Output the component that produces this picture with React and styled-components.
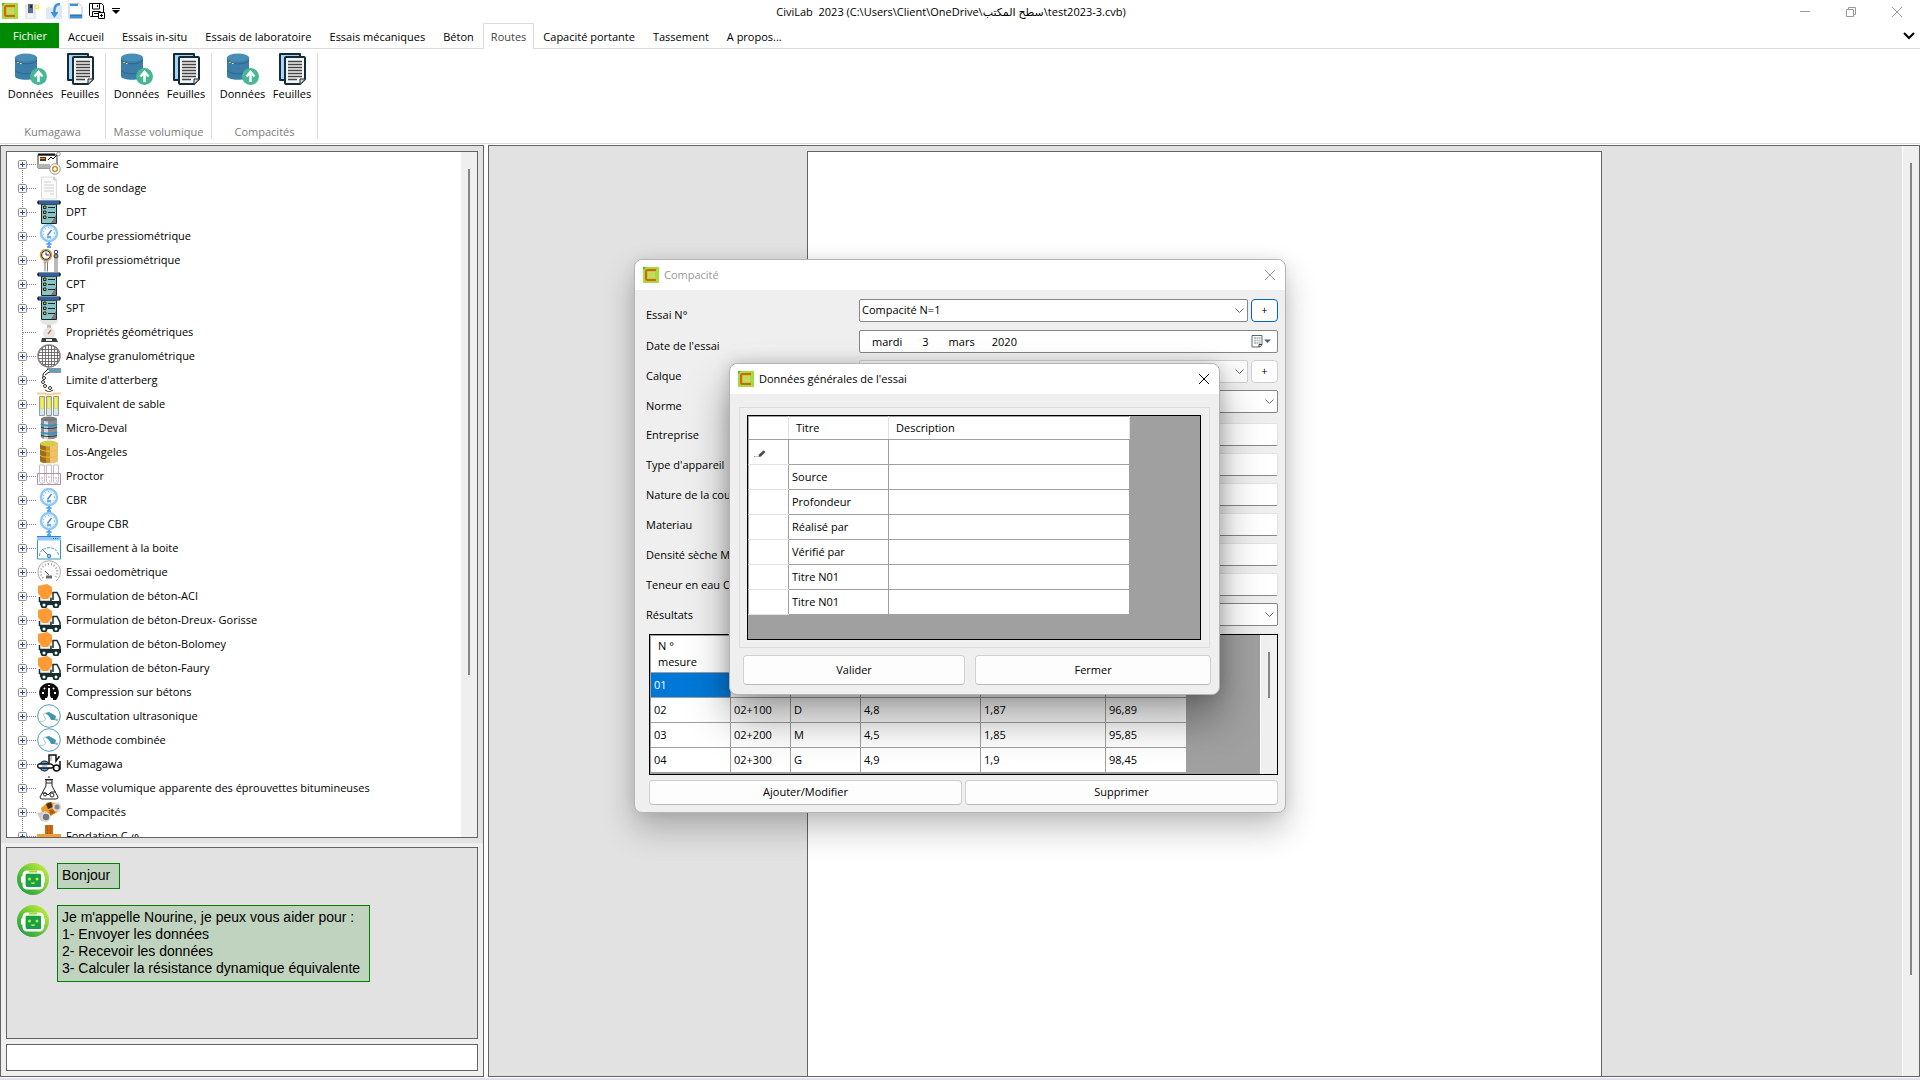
import React, { useState } from 'react'
import styled, { createGlobalStyle } from 'styled-components';


const GlobalStyle = createGlobalStyle`
  * {
    box-sizing: border-box;
  }

  body {
    margin: 0;
    font-family: 'Open Sans', 'Noto Sans', 'DejaVu Sans', sans-serif;
    font-size: 11px;
    line-height: 16px;
    color: #000;
  }

  button, input, select {
    font: inherit;
    color: inherit;
    margin: 0;
  }

  svg {
    display: block;
    flex: none;
  }
`;

/* ---------- window ---------- */

const Window = styled.div`
  position: relative;
  height: 100vh;
  display: flex;
  flex-direction: column;
  background-color: #fff;
  border-bottom: 2px solid #e1dfef;
  overflow: hidden;
`;

const TitleBar = styled.header`
  display: flex;
  height: 23px;
`;

const QuickAccess = styled.div`
  width: 120px;
  display: flex;
  align-items: center;
  gap: 6px;
  padding: 0 0 1px 2px;
`;

const IconButton = styled.button`
  border: none;
  background: none;
  padding: 0;
  cursor: pointer;
`;

const WindowTitle = styled.div`
  flex: 1;
  text-align: center;
  line-height: 24px;
  white-space: pre;
`;

const WindowButton = styled(IconButton)`
  width: 46px;
  display: flex;
  justify-content: center;
  align-items: center;
`;

const TabBar = styled.nav`
  display: flex;
  height: 26px;
  padding-right: 5px;
  border-bottom: 1px solid #dcdcdc;
`;

const Tab = styled.button`
  height: ${(props) => (props.$active ? '26px' : '25px')};
  padding: 1px ${(props) => (props.$active ? '7px' : '8px')} 0;
  border: 1px solid ${(props) => (props.$active ? '#dcdcdc' : 'transparent')};
  border-bottom: none;
  background-color: #fff;
  color: ${(props) => (props.$active ? '#444' : '#000')};
  line-height: 24px;
  white-space: nowrap;
  cursor: pointer;
`;

const FileTab = styled(Tab)`
  width: 60px;
  margin-right: -1px;
  border: none;
  background-color: #008a00;
  color: #fff;
`;

const Collapse = styled(IconButton)`
  margin-left: auto;
`;

const Ribbon = styled.section`
  display: flex;
  height: 95px;
  padding: 4px 0;
  border-bottom: 1px solid #dcdcdc;
`;

const RibbonGroup = styled.div`
  width: 106px;
  display: flex;
  flex-direction: column;
  justify-content: space-between;
  border-right: 1px solid #dcdcdc;
`;

const RibbonButtons = styled.div`
  display: flex;
  padding-left: 5px;
`;

const RibbonButton = styled(IconButton)`
  width: ${(props) => props.$w}px;
  display: flex;
  flex-direction: column;
  align-items: center;
  gap: 1px;
`;

const RibbonCaption = styled.div`
  text-align: center;
  line-height: 14px;
  color: #7c7c7c;
`;

/* ---------- panels ---------- */

const Workspace = styled.div`
  flex: 1;
  min-height: 0;
  display: flex;
  gap: 4px;
  padding: 1px 0;
`;

const Sidebar = styled.aside`
  width: 484px;
  display: flex;
  flex-direction: column;
  gap: 5px;
  padding: 5px;
  border: 1px solid #646464;
  background-color: #efefef;
`;

const TreePanel = styled.div`
  flex: 1;
  min-height: 0;
  display: flex;
  border: 1px solid #646464;
  background-color: #fff;
  box-shadow: 0 0 0 5px #e2e2e2;
  overflow: hidden;
`;

const TreeList = styled.ul`
  flex: 1;
  margin: 0;
  padding: 0 0 0 11px;
  list-style: none;
`;

const TreeItem = styled.li`
  height: 24px;
  display: flex;
  align-items: center;
  white-space: nowrap;
`;

const TreeText = styled.span`
  padding: 0 0 1px 5px;
`;

const ScrollTrack = styled.div`
  width: 17px;
  display: flex;
  justify-content: center;
  padding-top: ${(props) => props.$top}px;
  border-left: 1px solid #fff;
  background-color: #efefef;
`;

const ScrollThumb = styled.div`
  width: 2px;
  height: ${(props) => props.$size};
  background-color: #868686;
`;

const ChatPanel = styled.div`
  height: 192px;
  display: flex;
  flex-direction: column;
  gap: 10px;
  margin-top: 4px;
  padding: 15px 10px;
  border: 1px solid #646464;
  background-color: #e2e2e2;
  font-family: 'Liberation Sans', Arial, sans-serif;
  font-size: 14px;
  line-height: 17px;
`;

const ChatRow = styled.div`
  display: flex;
  align-items: flex-start;
  gap: 8px;
`;

const Bubble = styled.div`
  min-height: 26px;
  padding: 3px 9px 4px 4px;
  border: 1px solid #008000;
  background-color: #c0d3be;
  white-space: pre-line;
`;

const ChatInput = styled.input`
  height: 27px;
  padding: 0 4px;
  border: 1px solid #646464;
  background-color: #fff;
`;

const Viewer = styled.main`
  flex: 1;
  display: grid;
  grid-template-columns: 1fr 795px 1fr;
  border: 1px solid #646464;
  background-color: #e2e2e2;
`;

const Paper = styled.div`
  grid-column: 2;
  margin-top: 5px;
  border: 1px solid #646464;
  border-bottom: none;
  background-color: #fff;
`;

const ViewerScroll = styled(ScrollTrack)`
  justify-self: end;
`;

/* ---------- dialogs ---------- */

const Dialog = styled.section`
  position: absolute;
  left: ${(props) => props.$x}px;
  top: ${(props) => props.$y}px;
  width: ${(props) => props.$w}px;
  border: 1px solid #b4b4b4;
  border-radius: 8px;
  background-color: #efefef;
  box-shadow: ${(props) => (props.$front
    ? '0 24px 42px rgba(0, 0, 0, 0.36), 0 0 16px rgba(0, 0, 0, 0.18)'
    : '0 16px 32px rgba(0, 0, 0, 0.24), 0 0 14px rgba(0, 0, 0, 0.08)')};
`;

const DialogHead = styled.div`
  height: 30px;
  display: flex;
  align-items: center;
  gap: 5px;
  padding-left: 8px;
  border-radius: 8px 8px 0 0;
  background-color: #fff;
  color: ${(props) => (props.$front ? '#000' : '#999')};

  button {
    width: 30px;
    height: 30px;
    display: flex;
    justify-content: center;
    align-items: center;
    margin-left: auto;
  }
`;

const DialogTitle = styled.h2`
  margin: 0;
  font-size: 11px;
  font-weight: 400;
`;

const Form = styled.div`
  padding: 9px 7px 7px 11px;
`;

const FormRow = styled.div`
  display: grid;
  grid-template-columns: 213px 1fr;
  align-items: start;
  height: ${(props) => props.$h || 30}px;

  label {
    padding-top: ${(props) => (props.$low ? '8px' : '4px')};
    white-space: nowrap;
  }
`;

const FieldLine = styled.div`
  display: flex;
  gap: 3px;
`;

const SelectWrap = styled.div`
  position: relative;
  flex: 1;

  svg {
    position: absolute;
    right: 4px;
    top: 9px;
    pointer-events: none;
  }
`;

const Select = styled.select`
  display: block;
  width: 100%;
  height: 23px;
  padding: 0 20px 2px 2px;
  appearance: none;
  border: 1px solid ${(props) => (props.$light ? '#cfcfcf' : '#868686')};
  border-radius: 2px;
  background-color: ${(props) => (props.$light ? '#fbfbfb' : '#fff')};
`;

const DateBox = styled.div`
  display: flex;
  align-items: center;
  gap: 2px;
  height: 23px;
  padding-right: 6px;
  border: 1px solid #868686;
  border-radius: 2px;
  background-color: #fff;

  input {
    flex: 1;
    border: none;
    background: none;
    padding: 0 0 0 12px;
  }
`;

const TextBox = styled.input`
  height: 23px;
  padding: 0 3px;
  border: 1px solid #e4e4e4;
  border-bottom-color: #868686;
  border-radius: 2px;
  background-color: #fff;
`;

const Button = styled.button`
  flex: ${(props) => props.$grow || 1};
  height: ${(props) => (props.$tall ? '30px' : '25px')};
  padding: 0 0 1px;
  border: 1px solid #d0d0d0;
  border-bottom-color: #bcbcbc;
  border-radius: 4px;
  background-color: #fdfdfd;
  cursor: pointer;
`;

const PlusButton = styled(Button)`
  flex: none;
  width: 27px;
  height: 23px;
  border-color: ${(props) => (props.$focus ? '#0067c0' : '#d0d0d0')};
`;

const GridBox = styled.div`
  display: flex;
  justify-content: space-between;
  height: ${(props) => props.$h}px;
  border: 1px solid #000;
  background-color: #a0a0a0;
  overflow: hidden;
`;

const Table = styled.table`
  width: ${(props) => props.$w}px;
  height: max-content;
  table-layout: fixed;
  border-collapse: collapse;

  th, td {
    height: 25px;
    padding: 0 3px;
    border: 1px solid #a0a0a0;
    background-color: #fff;
    font-weight: 400;
    text-align: left;
    white-space: nowrap;
  }

  thead th {
    height: ${(props) => props.$head}px;
    padding: 0 7px;
    border-right-color: #e2e2e2;
  }

  tbody th {
    padding: 4px 5px 0;
    border-top-color: #e2e2e2;
    border-bottom-color: #e2e2e2;
  }

  td.selected {
    background-color: #0078d7;
    color: #fff;
  }
`;

const ResultArea = styled.div`
  padding: 1px 0 0 3px;
`;

const ButtonLine = styled.div`
  display: flex;
  gap: 3px;
  padding-top: 5px;
`;

const GeneralBody = styled.div`
  padding: 13px 9px 9px;
`;

const GroupBox = styled.div`
  padding: 7px 8px 7px 7px;
  border: 1px solid #dcdcdc;
`;

const GeneralButtons = styled.div`
  display: flex;
  gap: 10px;
  padding: 7px 0 0 4px;
  margin-right: -1px;
`;

/* ---------- icons ---------- */

const Logo = () => (
  <svg width="16" height="16" viewBox="0 0 16 16">
    <rect width="16" height="16" fill="#a4dc3c" />
    <rect x="5" y="5" width="7" height="6" fill="#c6d95c" />
    <path d="M13 3H4.500Q3 3 3 4.500V11.500Q3 13 4.500 13H13" fill="none" stroke="#d8601c" strokeWidth="2" />
    <path d="M0 0h3L0 3z" fill="#4cae3c" />
  </svg>
)

const NewIcon = () => (
  <svg width="16" height="16" viewBox="0 0 16 16">
    <rect x="1" y="1" width="11" height="15" fill="#e6e8ee" />
    <rect x="4" y="1" width="5" height="9" fill="#5a6d88" />
    <rect x="6" y="2" width="2" height="3" fill="#222d40" />
    <path d="M3 12h7M3 14h7" stroke="#fff" />
    <circle cx="13" cy="4" r="2" fill="#fff9a0" stroke="#f0e430" />
  </svg>
)

const OpenIcon = () => (
  <svg width="16" height="16" viewBox="0 0 16 16">
    <path d="M0 5l3-1 3 1 8-4 2 2v13H0z" fill="#dfe8f6" />
    <path d="M14 1c-5 0-6 4-5.500 9" fill="none" stroke="#3b93e0" strokeWidth="2.500" />
    <path d="M4.500 9h8L8.500 15z" fill="#3b93e0" />
  </svg>
)

const PageIcon = () => (
  <svg width="15" height="16" viewBox="0 0 15 16">
    <path d="M1 .5h10l3 3v12H1z" fill="#fff" stroke="#b9c2cc" />
    <path d="M2 1h8v2H2zM2 12h12v3H2z" fill="#3c8fdc" />
    <path d="M2 12h12" stroke="#1d5ea8" />
  </svg>
)

const SaveIcon = () => (
  <svg width="17" height="16" viewBox="0 0 17 16" fill="none" stroke="#000">
    <path d="M9 13.500H1.500l-1-1V.5h12l2 2V9" />
    <path d="M3.500 1v5h7V1M8.500 2v2M3.500 13V8.500h8M5 10.500h4" />
    <path d="M9.500 9.500h6v6h-6zM12.500 11v3M11 12.500h3" />
  </svg>
)

const DatabaseIcon = () => (
  <svg width="32" height="32" viewBox="0 0 32 32">
    <path d="M0 4v19c0 5 22 5 22 0V4z" fill="#3b7ea8" />
    <ellipse cx="11" cy="4.500" rx="11" ry="4" fill="#4a8db6" />
    <path d="M0 7c2 5 20 5 22 0M0 17c2 5 20 5 22 0" fill="none" stroke="#2c678e" />
    <path d="M2 9.500h2" stroke="#e8b35a" />
    <path d="M5 10.500h1.500" stroke="#fff" />
    <circle cx="23.500" cy="23.500" r="8.500" fill="#47b795" />
    <path d="M23.500 29v-8M19.500 23.500l4-4.500 4 4.500" fill="none" stroke="#fff" strokeWidth="2.500" />
  </svg>
)

const SheetsIcon = () => (
  <svg width="32" height="32" viewBox="0 0 32 32">
    <path d="M4 1h20v26H4z" fill="#a6d4fa" stroke="#142c36" strokeWidth="2" strokeLinejoin="round" />
    <path d="M9 5q0-1 1-1h18q1 0 1 1v21l-5 5H10q-1 0-1-1z" fill="#f4f4f4" stroke="#142c36" strokeWidth="2" />
    <path d="M24 31v-5h5" fill="#d4d4d4" stroke="#142c36" />
    <path d="M12 8.500h14M12 11.500h14M12 14.500h14M12 17.500h14M12 20.500h14M12 23.500h14M12 26.500h9" stroke="#444" strokeWidth="1.500" />
  </svg>
)

const MinimizeIcon = () => (
  <svg width="10" height="10" viewBox="0 0 10 10"><path d="M0 4.500h10" stroke="#999" /></svg>
)

const RestoreIcon = () => (
  <svg width="10" height="10" viewBox="0 0 10 10" fill="none" stroke="#999">
    <path d="M.5 2.500h7v7h-7zM2.500 2V.5h7v7H8" />
  </svg>
)

const CloseIcon = ({ color = '#999' }) => (
  <svg width="10" height="10" viewBox="0 0 10 10"><path d="M0 0l10 10M10 0L0 10" stroke={color} /></svg>
)

const ChevronIcon = () => (
  <svg width="9" height="6" viewBox="0 0 9 6"><path d="M.5 .5l4 4 4-4" fill="none" stroke="#666" /></svg>
)

const CalendarIcon = () => (
  <svg width="20" height="13" viewBox="0 0 20 13">
    <path d="M1 .5h10v9l-2 2.500H1z" fill="#fff" stroke="#5d6670" />
    <path d="M3 2h6.500v7H3z" fill="#b9bec4" />
    <path d="M3 4.500h6.500M3 6.500h6.500M5.500 2v7M7.500 2v7" stroke="#fff" strokeWidth=".5" />
    <path d="M8 12V9.500h3" fill="none" stroke="#333" />
    <path d="M13 4.500h7L16.500 8z" fill="#41618c" />
  </svg>
)

const PencilIcon = () => (
  <svg width="12" height="8" viewBox="0 0 12 8">
    <path d="M0 6.500h1.500M2.500 6.500h1" stroke="#999" />
    <path d="M4.500 7l.5-2.500L9.500.500l2 1.500L7 6.500z" fill="#4a4a4a" />
  </svg>
)

const Robot = () => (
  <svg width="32" height="32" viewBox="0 0 32 32">
    <defs>
      <linearGradient id="bot" x1="1" y1="0" x2="0" y2="1">
        <stop offset="0" stopColor="#d6f43c" />
        <stop offset=".5" stopColor="#6cc838" />
        <stop offset="1" stopColor="#0c9447" />
      </linearGradient>
    </defs>
    <circle cx="16" cy="16" r="16" fill="url(#bot)" />
    <path d="M5 13.500v6M27 13.500v6" stroke="#fff" strokeWidth="2" />
    <rect x="7" y="9" width="18.500" height="16" rx="3" fill="none" stroke="#fff" strokeWidth="3" />
    <rect x="9" y="11" width="15" height="13" rx="1" fill="#18a048" />
    <path d="M12 8.500h8" stroke="#9ad83c" strokeWidth="2" />
    <circle cx="12.500" cy="16" r="1.500" fill="#b4f03c" />
    <circle cx="20" cy="16" r="1.500" fill="#b4f03c" />
    <path d="M13.500 19.500q2.500 3 5 0z" fill="#d6f43c" />
  </svg>
)

const Rig = () => (
  <>
    <path d="M4.500 4h15v19.500h-15z" fill="#8cc4c6" stroke="#15262b" />
    <path d="M14 23l5-8v8z" fill="#777" />
    <path d="M1 .5h22l1 2-1 2H1l-1-2z" fill="#15262b" />
    <path d="M2 1h20v3H2z" fill="#355fa5" />
    <path d="M11 7.500h7M11 12.500h7M11 17.500h7" stroke="#15262b" />
    <path d="M6.500 6h2.500v2.500H6.500zM6.500 11h2.500v2.500H6.500zM6.500 16h2.500v2.500H6.500z" fill="#e0b53a" stroke="#15262b" />
  </>
)

const Dial = () => (
  <>
    <circle cx="12" cy="9" r="8" fill="#fff" stroke="#8ec8f8" strokeWidth="2.500" />
    <circle cx="12" cy="9" r="5.500" fill="none" stroke="#4a9bea" strokeDasharray="1 2" />
    <path d="M10.500 11.500L14.500 6M10 13h4" stroke="#3f8fe2" strokeWidth="1.500" />
    <path d="M12 18v6M9.500 20h5M10 23h4" stroke="#5aa8f0" strokeWidth="2" />
  </>
)

const Truck = () => (
  <>
    <path d="M1 2l9-2 5 3v7l-4 5H5L1 9z" fill="#ff9a35" />
    <path d="M2.500 13v4.500H14v-4" fill="none" stroke="#16302f" strokeWidth="1.500" />
    <path d="M16 16V8.500h4l3 6V20" fill="#fff" stroke="#16302f" strokeWidth="1.500" />
    <path d="M3 17h21v4H3z" fill="#16302f" />
    <circle cx="7" cy="21" r="2.500" fill="#fff" stroke="#16302f" strokeWidth="2" />
    <circle cx="19" cy="21" r="2.500" fill="#fff" stroke="#16302f" strokeWidth="2" />
  </>
)

const Probe = () => (
  <>
    <circle cx="12" cy="12" r="11.300" fill="#fff" stroke="#4b9db4" />
    <path d="M3 17c3 1 6 0 5-3s-3-4 0-5" fill="none" stroke="#a8c8d0" />
    <path d="M8 9l4-1 7 4-1 4h-4l-2-4z" fill="#3f97ae" />
    <path d="M18 15l3 1.500" stroke="#b0b0b0" strokeWidth="2" />
  </>
)

const drawings = {
  summary: (
    <>
      <path d="M1 3h19v13H1z" fill="#fff" stroke="#333" />
      <path d="M1 2.500h17" stroke="#111" strokeWidth="2" />
      <path d="M3 5h6v4H3z" fill="#5b3217" />
      <path d="M3 6.500h5" stroke="#e98a2d" />
      <path d="M1 12h12v4H1z" fill="#b4b4b4" />
      <path d="M11 8l3-3 2 2 5-5" fill="none" stroke="#111" />
      <circle cx="21.500" cy="2" r="1.800" fill="#fff" stroke="#999" />
      <circle cx="18" cy="17" r="5.300" fill="#fff" stroke="#999" />
      <circle cx="18" cy="17" r="2.400" fill="none" stroke="#c8922c" strokeWidth="1.500" />
    </>
  ),
  log: (
    <>
      <path d="M4.500 1h13l2 3v19h-15z" fill="#fafafa" stroke="#dcdcdc" />
      <path d="M7 6h7M7 9h10M7 12h10M7 15h10M13 18h4" stroke="#d0d0d0" />
      <path d="M17 1v3h2.500" fill="none" stroke="#bbb" />
    </>
  ),
  rig: <Rig />,
  dial: <Dial />,
  profile: (
    <>
      <circle cx="9" cy="7" r="5.500" fill="#fff" stroke="#cf973a" strokeWidth="1.500" />
      <circle cx="9" cy="7" r="4.300" fill="none" stroke="#222" />
      <path d="M9 4.500V7h3" fill="none" stroke="#222" />
      <path d="M8 14.500v9M10.500 14.500v9M6.500 14h5M18 10v14M20 10v14" stroke="#777" />
      <circle cx="19" cy="4" r="1.800" fill="none" stroke="#333" />
      <circle cx="19" cy="8" r="2" fill="#999" stroke="#333" />
    </>
  ),
  scale: (
    <>
      <path d="M3 0h18c0 3-4 5-9 5S3 3 3 0z" fill="#e4e4e4" />
      <path d="M10 5h4v3h-4z" fill="#bbb" />
      <circle cx="12" cy="13.500" r="6" fill="#e6e6ea" />
      <path d="M11 14l3-4" stroke="#e5762a" strokeWidth="1.500" />
      <path d="M5 18h14l2 4H4z" fill="#3a3d40" />
      <path d="M9 19h6v2H9z" fill="#eee" />
    </>
  ),
  sieve: (
    <>
      <circle cx="12" cy="12" r="11" fill="#fff" stroke="#8d7a7f" strokeWidth="1.500" />
      <path d="M5.500 4v16M8.500 2v20M11.500 1v22M14.500 2v20M17.500 3v18M20.500 6v12M4 5.500h16M2 8.500h20M1 11.500h22M2 14.500h20M3 17.500h18M6 20.500h12" stroke="#555" strokeWidth=".8" />
    </>
  ),
  limit: (
    <>
      <path d="M10 1h14M12 4h12" stroke="#182a33" />
      <path d="M12 1.500h12v2H12z" fill="#4ba5cf" />
      <path d="M11 1L6 6v3M12 4l-4 3" fill="none" stroke="#222" />
      <circle cx="7" cy="10" r="1.500" fill="none" stroke="#333" />
      <circle cx="6" cy="14" r="1.500" fill="none" stroke="#333" />
      <circle cx="8" cy="18" r="1.500" fill="none" stroke="#333" />
      <circle cx="13" cy="20" r="1.500" fill="none" stroke="#333" />
      <path d="M8 22l4 2 4-2" fill="none" stroke="#333" />
    </>
  ),
  tubes: (
    <>
      <path d="M0 1.500h8l2 1h5l2-1h7" fill="none" stroke="#efcf9b" strokeWidth="2" />
      <path d="M2.500 4.500h5v19h-5zM9.500 4.500h5v19h-5zM16.500 4.500h5v19h-5z" fill="#cfe9f8" stroke="#9a9a9a" />
      <path d="M3 5h4v12H3zM10 5h4v12h-4zM17 5h4v12h-4z" fill="#e2e23a" />
      <path d="M5 6v10M12 6v10M19 6v10" stroke="#f8f8a8" />
    </>
  ),
  drum: (
    <>
      <path d="M4 3v18c0 3 16 3 16 0V3z" fill="#8d8f92" />
      <path d="M7 4h4v19H7z" fill="#d6d8da" />
      <ellipse cx="12" cy="3" rx="8" ry="2.500" fill="#77797c" />
      <path d="M4 8c2 2 14 2 16 0M4 16c2 2 14 2 16 0" fill="none" stroke="#2d94c4" strokeWidth="2" />
      <path d="M4 11c2 2 14 2 16 0M4 19c2 2 14 2 16 0" fill="none" stroke="#333" />
    </>
  ),
  barrel: (
    <>
      <path d="M3 3v18c0 3 18 3 18 0V3z" fill="#f0c070" />
      <path d="M3 3v18c0 1 3 2 6 2V4z" fill="#a06a1c" />
      <path d="M9 4h4v19H9z" fill="#c99522" />
      <ellipse cx="12" cy="3.500" rx="9" ry="3" fill="#d9cb4c" />
      <path d="M3 9c2 3 16 3 18 0M3 15c2 3 16 3 18 0" fill="none" stroke="#dfc13a" />
    </>
  ),
  proctor: (
    <>
      <path d="M2.500 1h5v16a2.500 2.500 0 0 1-5 0zM9.500 1h5v16a2.500 2.500 0 0 1-5 0zM16.500 1h5v16a2.500 2.500 0 0 1-5 0z" fill="#fff" stroke="#c4bfc4" />
      <path d="M.5 9.500h23v11h-23z" fill="none" stroke="#b58bac" />
      <path d="M4 14h2M11 13h2M18 14h2M5 17h1M12 17h1M19 17h1" stroke="#c48bb4" />
    </>
  ),
  shear: (
    <>
      <path d="M.5 .5h23v22.500H.5z" fill="#fff" stroke="#3a96b8" />
      <path d="M0 0h24v4.500H0z" fill="#8fcaf6" />
      <path d="M0 .5h24" stroke="#3c7fc8" />
      <path d="M16 2.500h6" stroke="#2e6fb4" strokeDasharray="1 1" />
      <path d="M2.500 20c0-11 19-11 19 0" fill="none" stroke="#4b9db4" strokeDasharray="3 1" />
      <path d="M5 13l6 6" stroke="#3c7fc8" />
      <circle cx="12" cy="20" r="1.800" fill="#8fcaf6" stroke="#3c7fc8" />
    </>
  ),
  meter: (
    <>
      <path d="M5 21C-1 16 0 5 7 2c6-3 14 0 16 7 1 4 0 9-4 12" fill="#fff" stroke="#a8a8a8" />
      <path d="M6 18C1 12 5 4 12 4s11 8 6 14" fill="none" stroke="#999" strokeWidth="2" strokeDasharray="1 2" />
      <path d="M8 11l4 4" stroke="#555" />
      <path d="M9 15.500h6v3H9z" fill="#6a6a6a" />
    </>
  ),
  truck: <Truck />,
  press: (
    <>
      <path d="M5 20C-1 13 3 3 12 3s13 10 7 17z" fill="#0c0c0c" />
      <path d="M12 8v9M8 19h8" stroke="#fff" strokeWidth="2" />
      <path d="M10 18l2-5 2 5z" fill="#fff" />
      <path d="M5 13h2M17 13h2M7 8l1 1M16 9l1-1M12 5v1" stroke="#fff" strokeWidth="2" />
    </>
  ),
  probe: <Probe />,
  roller: (
    <>
      <path d="M12 11V3h7v6l3-4v-1M23 9v8h-6" fill="none" stroke="#111" strokeWidth="1.500" />
      <path d="M14 4v5" stroke="#888" />
      <circle cx="7.500" cy="14" r="5" fill="#4f9be2" stroke="#111" />
      <path d="M0 14l2-2h12l3 2-2 2H2z" fill="#fff" stroke="#111" strokeWidth="1.500" />
      <path d="M5 14h5" stroke="#4f9be2" />
      <circle cx="19.500" cy="16" r="3" fill="#fff" stroke="#111" strokeWidth="1.500" />
    </>
  ),
  flask: (
    <>
      <path d="M9 4h6v6l6 11q0 2-2 2H5q-2 0-2-2l6-11z" fill="#fff" stroke="#222" />
      <path d="M8 3.500h8M9 7h6M11 1h2M5 17h4l2 2 3-3h5" fill="none" stroke="#222" />
      <circle cx="8" cy="18.500" r="1.500" fill="none" stroke="#222" />
      <circle cx="15" cy="19" r="2" fill="none" stroke="#222" />
    </>
  ),
  compactor: (
    <>
      <path d="M4 8l7-6 9 1 2 8-8 5-9-2z" fill="#ef9a23" />
      <path d="M9 4l5-2 2 5-5 2z" fill="#4a2f28" />
      <path d="M12 10l5-1 1 4-5 2z" fill="#a8651a" />
      <circle cx="20" cy="7" r="3.500" fill="#888" stroke="#d8d8d8" strokeWidth="2" />
      <path d="M0 13l9-2 4 6-3 5-6-1z" fill="#ccc" />
      <circle cx="9" cy="17" r="4" fill="#777" stroke="#ddd" strokeWidth="1.500" />
    </>
  ),
  footing: (
    <>
      <path d="M8 1h8v10H8z" fill="#c96a12" />
      <path d="M10 3h1M13 3h1M10 6h1M13 6h1M10 9h1M13 9h1" stroke="#8a4206" />
      <path d="M0 10h24v12H0z" fill="#f39b35" />
    </>
  ),
}

const TreeIcon = ({ name }) => (
  <svg width="24" height="24" viewBox="0 0 24 24">{drawings[name]}</svg>
)

const Branch = ({ first, leaf }) => (
  <svg width="19" height="24" viewBox="0 0 19 24">
    <path d={first ? 'M4.500 12v12' : 'M4.500 0v24'} stroke="#808080" strokeDasharray="1 1" />
    <path d="M5 12.500h14" stroke="#808080" strokeDasharray="1 1" />
    {!leaf && (
      <>
        <rect x=".5" y="8.500" width="8" height="8" rx="1" fill="#f6f6f6" stroke="#919191" />
        <path d="M2 12.500h5M4.500 10v5" stroke="#2b4f9e" />
      </>
    )}
  </svg>
)

/* ---------- data ---------- */

const tabs = ['Accueil', 'Essais in-situ', 'Essais de laboratoire', 'Essais mécaniques', 'Béton', 'Routes', 'Capacité portante', 'Tassement', 'A propos...']

const groups = ['Kumagawa', 'Masse volumique', 'Compacités']

const treeItems = [
  ['summary', 'Sommaire'],
  ['log', 'Log de sondage'],
  ['rig', 'DPT'],
  ['dial', 'Courbe pressiométrique'],
  ['profile', 'Profil pressiométrique'],
  ['rig', 'CPT'],
  ['rig', 'SPT'],
  ['scale', 'Propriétés géométriques'],
  ['sieve', 'Analyse granulométrique'],
  ['limit', "Limite d'atterberg"],
  ['tubes', 'Equivalent de sable'],
  ['drum', 'Micro-Deval'],
  ['barrel', 'Los-Angeles'],
  ['proctor', 'Proctor'],
  ['dial', 'CBR'],
  ['dial', 'Groupe CBR'],
  ['shear', 'Cisaillement à la boite'],
  ['meter', 'Essai oedomètrique'],
  ['truck', 'Formulation de béton-ACI'],
  ['truck', 'Formulation de béton-Dreux- Gorisse'],
  ['truck', 'Formulation de béton-Bolomey'],
  ['truck', 'Formulation de béton-Faury'],
  ['press', 'Compression sur bétons'],
  ['probe', 'Auscultation ultrasonique'],
  ['probe', 'Méthode combinée'],
  ['roller', 'Kumagawa'],
  ['flask', 'Masse volumique apparente des éprouvettes bitumineuses'],
  ['compactor', 'Compacités'],
  ['footing', 'Fondation C-φ'],
]

const textFields = ['Entreprise', "Type d'appareil", 'Nature de la couche', 'Materiau', 'Densité sèche Max', 'Teneur en eau Opt']

const measures = [
  ['01', '', '', '', '', ''],
  ['02', '02+100', 'D', '4,8', '1,87', '96,89'],
  ['03', '02+200', 'M', '4,5', '1,85', '95,85'],
  ['04', '02+300', 'G', '4,9', '1,9', '98,45'],
]

const generalRows = ['', 'Source', 'Profondeur', 'Réalisé par', 'Vérifié par', 'Titre N01', 'Titre N01']


function Combo({ id, value = '', light }) {
  return (
    <SelectWrap>
      <Select id={id} $light={light} defaultValue={value}>
        <option value={value}>{value}</option>
      </Select>
      <ChevronIcon />
    </SelectWrap>
  )
}

function Compacite() {
  return (
    <Dialog $x={634} $y={259} $w={652} aria-label='Compacité'>
      <DialogHead>
        <Logo />
        <DialogTitle>Compacité</DialogTitle>
        <IconButton aria-label='Fermer'><CloseIcon /></IconButton>
      </DialogHead>

      <Form>
        <FormRow $low $h={31}>
          <label htmlFor='essai'>Essai N°</label>
          <FieldLine>
            <Combo id='essai' value='Compacité N=1' />
            <PlusButton $focus>+</PlusButton>
          </FieldLine>
        </FormRow>
        <FormRow $low>
          <label htmlFor='date'>Date de l'essai</label>
          <DateBox>
            <input id='date' defaultValue='mardi       3       mars      2020' />
            <CalendarIcon />
          </DateBox>
        </FormRow>
        <FormRow $low>
          <label htmlFor='calque'>Calque</label>
          <FieldLine>
            <Combo id='calque' light />
            <PlusButton>+</PlusButton>
          </FieldLine>
        </FormRow>
        <FormRow $low $h={33}>
          <label htmlFor='norme'>Norme</label>
          <Combo id='norme' />
        </FormRow>
        {textFields.map((el, idx) => (
          <FormRow key={el}>
            <label htmlFor={`champ${idx}`}>{el}</label>
            <TextBox id={`champ${idx}`} />
          </FormRow>
        ))}
        <FormRow>
          <label htmlFor='resultats'>Résultats</label>
          <Combo id='resultats' />
        </FormRow>

        <ResultArea>
          <GridBox $h={141}>
            <Table $w={536} $head={37}>
              <colgroup>
                <col width='80' /><col width='60' /><col width='70' />
                <col width='120' /><col width='125' /><col width='81' />
              </colgroup>
              <thead>
                <tr>
                  <th>N °<br />mesure</th>
                  <th /><th /><th /><th /><th />
                </tr>
              </thead>
              <tbody>
                {measures.map((row) => (
                  <tr key={row[0]}>
                    {row.map((el, idx) => (
                      <td key={idx} className={el === '01' ? 'selected' : undefined}>{el}</td>
                    ))}
                  </tr>
                ))}
              </tbody>
            </Table>
            <ScrollTrack $top={17}><ScrollThumb $size='46px' /></ScrollTrack>
          </GridBox>
          <ButtonLine>
            <Button>Ajouter/Modifier</Button>
            <Button>Supprimer</Button>
          </ButtonLine>
        </ResultArea>
      </Form>
    </Dialog>
  )
}

function DonneesGenerales() {
  return (
    <Dialog $x={729} $y={363} $w={491} $front aria-label="Données générales de l'essai">
      <DialogHead $front>
        <Logo />
        <DialogTitle>Données générales de l'essai</DialogTitle>
        <IconButton aria-label='Fermer'><CloseIcon color='#000' /></IconButton>
      </DialogHead>

      <GeneralBody>
        <GroupBox>
          <GridBox $h={225}>
            <Table $w={381} $head={23}>
              <colgroup>
                <col width='40' /><col width='100' /><col width='241' />
              </colgroup>
              <thead>
                <tr>
                  <th />
                  <th>Titre</th>
                  <th>Description</th>
                </tr>
              </thead>
              <tbody>
                {generalRows.map((el, idx) => (
                  <tr key={idx}>
                    <th>{idx === 0 && <PencilIcon />}</th>
                    <td>{el}</td>
                    <td />
                  </tr>
                ))}
              </tbody>
            </Table>
          </GridBox>
        </GroupBox>
        <GeneralButtons>
          <Button $tall $grow={16}>Valider</Button>
          <Button $tall $grow={17}>Fermer</Button>
        </GeneralButtons>
      </GeneralBody>
    </Dialog>
  )
}

function App() {

  const [activeTab, setActiveTab] = useState('Routes')

  return (
    <Window>
      <GlobalStyle />

      <TitleBar>
        <QuickAccess>
          <Logo />
          <IconButton aria-label='Nouveau'><NewIcon /></IconButton>
          <IconButton aria-label='Ouvrir'><OpenIcon /></IconButton>
          <IconButton aria-label='Page'><PageIcon /></IconButton>
          <IconButton aria-label='Enregistrer'><SaveIcon /></IconButton>
          <IconButton aria-label='Personnaliser'>
            <svg width="8" height="7" viewBox="0 0 8 7"><path d="M0 .5h8" stroke="#000" /><path d="M0 2h8L4 6z" /></svg>
          </IconButton>
        </QuickAccess>
        <WindowTitle>{'CiviLab  2023 (C:\\Users\\Client\\OneDrive\\سطح المكتب\\test2023-3.cvb)'}</WindowTitle>
        <WindowButton aria-label='Réduire'><MinimizeIcon /></WindowButton>
        <WindowButton aria-label='Restaurer'><RestoreIcon /></WindowButton>
        <WindowButton aria-label='Quitter'><CloseIcon /></WindowButton>
      </TitleBar>

      <TabBar>
        <FileTab>Fichier</FileTab>
        {tabs.map((el) => (
          <Tab key={el} $active={el === activeTab} onClick={() => setActiveTab(el)}>{el}</Tab>
        ))}
        <Collapse aria-label='Réduire le ruban'>
          <svg width="12" height="8" viewBox="0 0 12 8"><path d="M1 1l5 5 5-5" fill="none" stroke="#000" strokeWidth="2" /></svg>
        </Collapse>
      </TabBar>

      <Ribbon>
        {groups.map((el) => (
          <RibbonGroup key={el}>
            <RibbonButtons>
              <RibbonButton $w={51}><DatabaseIcon />Données</RibbonButton>
              <RibbonButton $w={48}><SheetsIcon />Feuilles</RibbonButton>
            </RibbonButtons>
            <RibbonCaption>{el}</RibbonCaption>
          </RibbonGroup>
        ))}
      </Ribbon>

      <Workspace>
        <Sidebar>
          <TreePanel>
            <TreeList>
              {treeItems.map(([icon, text], idx) => (
                <TreeItem key={idx}>
                  <Branch first={idx === 0} leaf={icon === 'scale'} />
                  <TreeIcon name={icon} />
                  <TreeText>{text}</TreeText>
                </TreeItem>
              ))}
            </TreeList>
            <ScrollTrack $top={17}><ScrollThumb $size='506px' /></ScrollTrack>
          </TreePanel>
          <ChatPanel>
            <ChatRow>
              <Robot />
              <Bubble>Bonjour</Bubble>
            </ChatRow>
            <ChatRow>
              <Robot />
              <Bubble>
                {"Je m'appelle Nourine, je peux vous aider pour :\n1- Envoyer les données\n2- Recevoir les données\n3- Calculer la résistance dynamique équivalente"}
              </Bubble>
            </ChatRow>
          </ChatPanel>
          <ChatInput aria-label='Message' />
        </Sidebar>

        <Viewer>
          <Paper />
          <ViewerScroll $top={17}><ScrollThumb $size='812px' /></ViewerScroll>
        </Viewer>
      </Workspace>

      <Compacite />
      <DonneesGenerales />
    </Window>
  )
}

export default App
